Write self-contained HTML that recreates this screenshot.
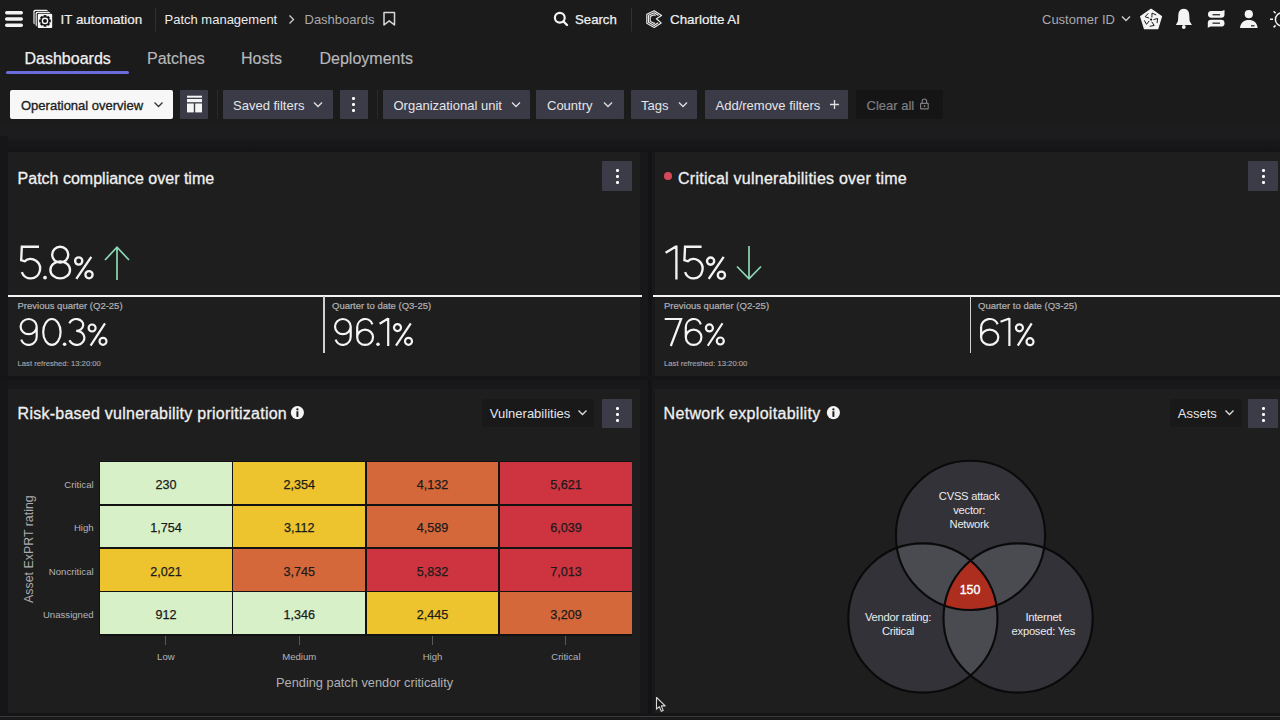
<!DOCTYPE html>
<html><head><meta charset="utf-8">
<style>
*{box-sizing:border-box;margin:0;padding:0}
html,body{width:1280px;height:720px;overflow:hidden;background:#18181a}
body{position:relative;font-family:"Liberation Sans",sans-serif;color:#e8e8e8}
.a{position:absolute;white-space:nowrap;line-height:1}
.hdr{position:absolute;left:0;top:0;width:1280px;height:136px;background:#1b1b1c}
.grad{position:absolute;left:0;top:125px;width:1280px;height:27px;background:linear-gradient(#1c1c1e 0px,#1d1d1f 11px,#19191b 15px,#141416 27px)}
.card{position:absolute;background:#1e1e1f}
.btn{position:absolute;background:#3b3a47;border-radius:1px}
.kb{position:absolute;background:#3c3c49;border-radius:1px}
.kb i{position:absolute;left:13.5px;width:3px;height:3px;background:#fff;border-radius:1.3px}
.sep{position:absolute;width:1px;background:#2e2e30}
.t13{font-size:13px}
.w{color:#f0f0f0}
.hc{position:absolute;display:flex;align-items:center;justify-content:center}
.hc span{font-size:12.6px;line-height:1;color:#1b1b1b;-webkit-text-stroke:0.25px #1b1b1b;position:relative;top:1.9px}
.hl{font-size:9.6px;color:#b4b4b6}
</style></head><body>
<div class="hdr"></div>
<div class="grad"></div>
<div style="position:absolute;left:0;top:136px;width:8px;height:584px;background:#161618"></div>

<!-- header -->
<svg class="a" style="left:0;top:0" width="1280" height="40">
 <g fill="#f4f4f4">
  <rect x="5" y="11" width="18" height="3.4" rx="1.7"/>
  <rect x="5" y="17.3" width="18" height="3.4" rx="1.7"/>
  <rect x="5" y="23.6" width="18" height="3.4" rx="1.7"/>
 </g>
 <!-- app icon -->
 <rect x="33.4" y="9.7" width="14.6" height="14.6" rx="1.6" fill="#f0f0f0"/>
 <rect x="34.6" y="10.9" width="14.6" height="14.6" rx="1.4" fill="#1b1b1c"/>
 <rect x="35.6" y="11.7" width="14.6" height="14.6" rx="1.6" fill="#f0f0f0"/>
 <rect x="36.8" y="12.9" width="15.2" height="15.2" rx="1.4" fill="#1b1b1c"/>
 <rect x="37.8" y="13.7" width="14.4" height="14.4" rx="1.2" fill="#f6f6f6"/>
 <g transform="translate(45,20.9)" fill="#111">
  <circle r="4.7"/>
  <g id="teeth"><rect x="-1.4" y="-5.8" width="2.8" height="11.6"/><rect x="-5.8" y="-1.4" width="11.6" height="2.8"/></g>
  <g transform="rotate(45)"><rect x="-1.4" y="-5.8" width="2.8" height="11.6"/><rect x="-5.8" y="-1.4" width="11.6" height="2.8"/></g>
  <circle r="3.3" fill="#f6f6f6"/>
  <circle r="1.95"/>
 </g>
 <rect x="155" y="8" width="1" height="23.5" fill="#303032"/>
 <!-- breadcrumb chevron -->
 <path d="M289.5 15.5 L293.5 19.5 L289.5 23.5" fill="none" stroke="#cfcfcf" stroke-width="1.3"/>
 <!-- bookmark -->
 <path d="M384 12.5 H394.5 V25 L389.25 20.8 L384 25 Z" fill="none" stroke="#d8d8d8" stroke-width="1.5" stroke-linejoin="round"/>
 <!-- search -->
 <circle cx="559.8" cy="17.8" r="4.9" fill="none" stroke="#f4f4f4" stroke-width="2.2"/>
 <path d="M563.5 21.5 L567 25" stroke="#f4f4f4" stroke-width="2.4" stroke-linecap="round"/>
 <rect x="631" y="8" width="1" height="23.5" fill="#303032"/>
 <!-- charlotte -->
 <g fill="none" stroke="#ececec" stroke-width="1.15" stroke-linejoin="round">
  <path d="M654.2 10.8 L661.6 15.5 L656.4 18.7 L661.2 22.9 L654.2 27.4 L646.8 23.3 L646.8 14.3 Z"/>
  <path d="M658.56 15.60 L654.20 12.79 L648.51 15.35 L648.51 22.26 L654.20 25.40 L658.16 22.80"/>
  <path d="M655.52 15.69 L654.20 14.79 L650.22 16.39 L650.22 21.21 L654.20 23.41 L655.12 22.71"/>
 </g>
 <!-- customer chevron -->
 <path d="M1122 16.5 L1126 20.5 L1130 16.5" fill="none" stroke="#cfcfcf" stroke-width="1.3"/>
 <!-- pentagon -->
 <path d="M1151.1 9.3 L1161.5 16.5 L1157.7 28.7 L1144.5 28.7 L1140.7 16.5 Z" fill="#f4f4f4" stroke="#f4f4f4" stroke-width="1.2" stroke-linejoin="round"/>
 <path d="M1151.89 17.44 L1152.02 13.06 L1156.23 14.98 M1153.40 19.68 L1157.60 18.45 L1157.08 23.05 M1151.73 21.81 L1154.20 25.43 L1149.67 26.35 M1149.19 20.89 L1146.52 24.35 L1144.24 20.32 M1149.29 18.18 L1145.17 16.71 L1148.29 13.30 " fill="none" stroke="#1b1b1c" stroke-width="1"/>
 <circle cx="1151.1" cy="19.6" r="1.1" fill="#111"/>
 <!-- bell -->
 <g fill="#f4f4f4">
  <path d="M1183.8 8.8 C1180.2 8.8 1178.4 11.6 1178.3 15.5 L1178 21 L1175.9 24.9 H1191.9 L1189.6 21 L1189.3 15.5 C1189.2 11.6 1187.4 8.8 1183.8 8.8 Z"/>
  <circle cx="1183.8" cy="27" r="1.9"/>
 </g>
 <!-- chat -->
 <g fill="#f4f4f4">
  <path d="M1211.4 10.9 H1221.8 L1224.5 9.9 V14.5 A3.3 3.3 0 0 1 1221.2 17.8 H1211.4 A3.45 3.45 0 0 1 1211.4 10.9 Z"/>
  <path d="M1211 19.7 H1221.1 A3.45 3.45 0 0 1 1221.1 26.6 H1210.6 L1207.8 27.7 V23 A3.3 3.3 0 0 1 1211 19.7 Z"/>
 </g>
 <rect x="1212.5" y="14" width="7.5" height="1.4" fill="#3a3a3c"/>
 <rect x="1212.5" y="22.5" width="7.5" height="1.4" fill="#3a3a3c"/>
 <!-- person -->
 <g fill="#f4f4f4">
  <circle cx="1248.8" cy="14.2" r="4.1"/>
  <path d="M1240 28 C1240.5 22.5 1244 20 1248.8 20 C1253.6 20 1257.1 22.5 1257.6 28 Z"/>
 </g>
 <rect x="1251" y="25.2" width="3.5" height="1.2" fill="#1b1b1c"/>
 <!-- sun -->
 <g stroke="#f0f0f0" stroke-width="1.5" fill="none">
  <circle cx="1282" cy="19.4" r="6.6"/>
  <path d="M1270 19.2 H1273 M1273.6 11.2 L1275.6 13.2 M1273.6 27.4 L1275.6 25.4"/>
 </g>
</svg>
<div class="a t13 w" style="left:60.5px;top:13.4px;font-size:13.4px;-webkit-text-stroke:0.2px #f0f0f0">IT automation</div>
<div class="a t13" style="left:164.5px;top:13.4px;color:#ececec">Patch management</div>
<div class="a t13" style="left:304.5px;top:13.4px;color:#a9a9ab">Dashboards</div>
<div class="a t13 w" style="left:575px;top:13.4px;font-size:13.2px;-webkit-text-stroke:0.25px #f0f0f0">Search</div>
<div class="a t13 w" style="left:670px;top:13.4px;font-size:13.4px;-webkit-text-stroke:0.2px #f0f0f0">Charlotte AI</div>
<div class="a t13" style="left:1042px;top:13.4px;color:#a9a9ab">Customer ID</div>

<!-- tabs -->
<div class="a" style="left:24.5px;top:50.5px;font-size:16px;color:#f2f2f2;-webkit-text-stroke:0.25px #f2f2f2">Dashboards</div>
<div class="a" style="left:147px;top:50.5px;font-size:16px;color:#b8b8ba;-webkit-text-stroke:0.15px #b8b8ba">Patches</div>
<div class="a" style="left:241px;top:50.5px;font-size:16px;color:#b8b8ba;-webkit-text-stroke:0.15px #b8b8ba">Hosts</div>
<div class="a" style="left:319.5px;top:50.5px;font-size:16px;color:#b8b8ba;-webkit-text-stroke:0.15px #b8b8ba">Deployments</div>
<div style="position:absolute;left:6px;top:71px;width:123px;height:3px;background:#6b6bd9;border-radius:2px"></div>

<!-- filter bar -->
<div style="position:absolute;left:10px;top:90px;width:163px;height:29px;background:#f7f7f7;border-radius:2px"></div>
<div class="btn" style="left:180px;top:89.5px;width:28px;height:29.5px"></div>
<div class="sep" style="left:216.5px;top:90px;height:29px;background:#2a2a2c"></div>
<div class="btn" style="left:223px;top:89.5px;width:109.5px;height:29.5px"></div>
<div class="kb" style="left:339.5px;top:89.5px;width:28.5px;height:29.5px"><i style="top:7.5px;left:12.8px"></i><i style="top:13.3px;left:12.8px"></i><i style="top:19px;left:12.8px"></i></div>
<div class="sep" style="left:377px;top:90px;height:29px;background:#2a2a2c"></div>
<div class="btn" style="left:383px;top:89.5px;width:147px;height:29.5px"></div>
<div class="btn" style="left:536px;top:89.5px;width:87.5px;height:29.5px"></div>
<div class="btn" style="left:630.5px;top:89.5px;width:66.5px;height:29.5px"></div>
<div class="btn" style="left:704.5px;top:89.5px;width:143.5px;height:29.5px"></div>
<div style="position:absolute;left:856px;top:90px;width:87px;height:29px;background:#151516;border-radius:2px"></div>
<svg class="a" style="left:0;top:80px" width="1280" height="50">
 <g fill="none" stroke-width="1.3">
  <path d="M154.5 22.5 L158.5 26.5 L162.5 22.5" stroke="#333"/>
  <path d="M314 22.5 L318 26.5 L322 22.5" stroke="#e0e0e0"/>
  <path d="M512 22.5 L516 26.5 L520 22.5" stroke="#e0e0e0"/>
  <path d="M604 22.5 L608 26.5 L612 22.5" stroke="#e0e0e0"/>
  <path d="M679 22.5 L683 26.5 L687 22.5" stroke="#e0e0e0"/>
  <path d="M834.5 20 V29 M830 24.5 H839" stroke="#e0e0e0"/>
 </g>
 <g fill="#f4f4f4">
  <rect x="187" y="15.7" width="15" height="2"/>
  <rect x="187" y="19" width="15" height="3.2"/>
  <rect x="187" y="23.5" width="6.8" height="8.9"/>
  <rect x="195.2" y="23.5" width="6.8" height="8.9"/>
 </g>
 <g fill="none" stroke="#7c7c80" stroke-width="1.2">
  <rect x="920.6" y="23.4" width="7.6" height="5.4" rx="0.4"/>
  <path d="M922.2 23.4 V21.2 A2.2 2.2 0 0 1 926.6 21.2 V23.4"/>
 </g>
 <rect x="923.8" y="25.2" width="1.4" height="1.8" fill="#7c7c80"/>
</svg>
<div class="a" style="left:21px;top:98.7px;font-size:13px;color:#1e1e1e;-webkit-text-stroke:0.35px #1e1e1e">Operational overview</div>
<div class="a" style="left:233px;top:98.7px;font-size:13px;color:#e6e6e8">Saved filters</div>
<div class="a" style="left:393.5px;top:98.7px;font-size:13px;color:#e6e6e8">Organizational unit</div>
<div class="a" style="left:547px;top:98.7px;font-size:13px;color:#e6e6e8">Country</div>
<div class="a" style="left:641px;top:98.7px;font-size:13px;color:#e6e6e8">Tags</div>
<div class="a" style="left:715.5px;top:98.7px;font-size:13px;color:#e6e6e8">Add/remove filters</div>
<div class="a" style="left:866.5px;top:98.7px;font-size:13px;color:#7e7e82;-webkit-text-stroke:0.2px #7e7e82">Clear all</div>

<!-- cards -->
<div style="position:absolute;left:648px;top:152px;width:4px;height:561px;background:#131315"></div>
<div style="position:absolute;left:0;top:376px;width:1280px;height:4px;background:#151517"></div>
<div style="position:absolute;left:0;top:713px;width:1280px;height:3px;background:#151517"></div>

<div class="card" style="left:8px;top:152px;width:632px;height:224px"></div>
<div class="card" style="left:655px;top:152px;width:625px;height:224px"></div>
<div class="card" style="left:8px;top:389px;width:632px;height:324px"></div>
<div class="card" style="left:655px;top:389px;width:625px;height:324px"></div>
<div style="position:absolute;left:0;top:716px;width:1280px;height:1px;background:#3a3a3a"></div>
<div style="position:absolute;left:0;top:717px;width:1280px;height:3px;background:#1a1a1a"></div>


<!-- card1 content -->
<div class="a" style="left:17.6px;top:171px;font-size:16px;color:#f0f0f0;-webkit-text-stroke:0.3px #f0f0f0">Patch compliance over time</div>
<div class="kb" style="left:602px;top:161px;width:30px;height:30px"><i style="top:8px;left:13.6px"></i><i style="top:14px;left:13.6px"></i><i style="top:20px;left:13.6px"></i></div>
<div style="position:absolute;left:8px;top:294.5px;width:634px;height:2px;background:#f4f4f4"></div>
<div style="position:absolute;left:323px;top:296px;width:1.5px;height:57px;background:#cfcfcf"></div>
<div class="a" style="left:17.5px;top:300.6px;font-size:9.5px;color:#b2b2b4;-webkit-text-stroke:0.2px #b2b2b4">Previous quarter (Q2-25)</div>
<div class="a" style="left:332px;top:300.6px;font-size:9.5px;color:#b2b2b4;-webkit-text-stroke:0.2px #b2b2b4">Quarter to date (Q3-25)</div>
<div class="a" style="left:17.5px;top:359.8px;font-size:7.7px;color:#a4a4a6;-webkit-text-stroke:0.15px #a4a4a6">Last refreshed: 13:20:00</div>

<!-- card2 content -->
<div style="position:absolute;left:664.3px;top:172.4px;width:7.6px;height:7.6px;border-radius:50%;background:#d6475a"></div>
<div class="a" style="left:678px;top:171px;font-size:16px;color:#f0f0f0;-webkit-text-stroke:0.3px #f0f0f0;letter-spacing:0.25px">Critical vulnerabilities over time</div>
<div class="kb" style="left:1248px;top:161px;width:30px;height:30px"><i style="top:8px;left:13.6px"></i><i style="top:14px;left:13.6px"></i><i style="top:20px;left:13.6px"></i></div>
<div style="position:absolute;left:653px;top:294.5px;width:627px;height:2px;background:#f4f4f4"></div>
<div style="position:absolute;left:969.5px;top:296px;width:1.5px;height:57px;background:#cfcfcf"></div>
<div class="a" style="left:664px;top:300.6px;font-size:9.5px;color:#b2b2b4;-webkit-text-stroke:0.2px #b2b2b4">Previous quarter (Q2-25)</div>
<div class="a" style="left:978px;top:300.6px;font-size:9.5px;color:#b2b2b4;-webkit-text-stroke:0.2px #b2b2b4">Quarter to date (Q3-25)</div>
<div class="a" style="left:664px;top:359.8px;font-size:7.7px;color:#a4a4a6;-webkit-text-stroke:0.15px #a4a4a6">Last refreshed: 13:20:00</div>

<!-- DIGITS -->
<svg class="a" style="left:0;top:0" width="1280" height="720">
<path d="M39 246.78 L21.84 246.78 L21.18 260.22 L24.61 261.29 A9.38 9.71 0 0 1 35.68 260.53 A9.38 9.71 0 0 1 39.71 271.23 A9.38 9.71 0 0 1 31.05 278.42 A9.38 9.71 0 0 1 21.82 272.04M52.14 254.73 A8.06 7.96 0 0 1 60.2 246.78 A8.06 7.96 0 0 1 68.27 254.73 A8.06 7.96 0 0 1 60.2 262.69 A8.06 7.96 0 0 1 52.14 254.73ZM50.38 269.96 A9.82 8.47 0 0 1 60.2 261.49 A9.82 8.47 0 0 1 70.03 269.96 A9.82 8.47 0 0 1 60.2 278.43 A9.82 8.47 0 0 1 50.38 269.96ZM75.1 261 A3.6 3.6 0 0 1 78.7 257.4 A3.6 3.6 0 0 1 82.3 261 A3.6 3.6 0 0 1 78.7 264.6 A3.6 3.6 0 0 1 75.1 261ZM85.4 274.7 A3.6 3.6 0 0 1 89 271.1 A3.6 3.6 0 0 1 92.6 274.7 A3.6 3.6 0 0 1 89 278.3 A3.6 3.6 0 0 1 85.4 274.7ZM91.3 256.9 L76.3 278.9" fill="none" stroke="#f4f4f4" stroke-width="2.35"/>
<path d="M665.6 252.7 L676.4 246.31 M676.4 245.6 L676.4 279.6M701.58 246.78 L685.04 246.78 L684.41 260.22 L687.74 261.29 A9 9.71 0 0 1 698.36 260.53 A9 9.71 0 0 1 702.22 271.23 A9 9.71 0 0 1 693.92 278.42 A9 9.71 0 0 1 685.07 272.04M707 261.1 A3.6 3.6 0 0 1 710.6 257.5 A3.6 3.6 0 0 1 714.2 261.1 A3.6 3.6 0 0 1 710.6 264.7 A3.6 3.6 0 0 1 707 261.1ZM717.8 275.2 A3.6 3.6 0 0 1 721.4 271.6 A3.6 3.6 0 0 1 725 275.2 A3.6 3.6 0 0 1 721.4 278.8 A3.6 3.6 0 0 1 717.8 275.2ZM723.7 256.9 L708.7 278.9" fill="none" stroke="#f4f4f4" stroke-width="2.35"/>
<path d="M20.6 326.61 A8.05 7.61 0 0 1 28.65 319 A8.05 7.61 0 0 1 36.7 326.61 A8.05 7.61 0 0 1 28.65 334.22 A8.05 7.61 0 0 1 20.6 326.61ZM36.7 326.61 L36.7 336.47 A8.05 8.43 0 0 1 30.19 344.75 A8.05 8.43 0 0 1 21.19 339.63M43.2 331.95 A8.7 12.95 0 0 1 51.9 319 A8.7 12.95 0 0 1 60.6 331.95 A8.7 12.95 0 0 1 51.9 344.9 A8.7 12.95 0 0 1 43.2 331.95ZM69.37 323.38 A7.04 5.91 0 0 1 77.39 319.09 A7.04 5.91 0 0 1 83.19 325.43 A7.04 5.91 0 0 1 76.17 330.83 L76.7 330.83 A7.7 7.04 0 0 1 84.35 337.05 A7.7 7.04 0 0 1 78.48 344.71 A7.7 7.04 0 0 1 69.46 340.27M88.6 328 A3.5 3.5 0 0 1 92.1 324.5 A3.5 3.5 0 0 1 95.6 328 A3.5 3.5 0 0 1 92.1 331.5 A3.5 3.5 0 0 1 88.6 328ZM99.5 341.3 A3.5 3.5 0 0 1 103 337.8 A3.5 3.5 0 0 1 106.5 341.3 A3.5 3.5 0 0 1 103 344.8 A3.5 3.5 0 0 1 99.5 341.3ZM105 323.3 L90.6 345.6" fill="none" stroke="#f4f4f4" stroke-width="2.2"/>
<path d="M335 326.61 A7.85 7.61 0 0 1 342.85 319 A7.85 7.61 0 0 1 350.7 326.61 A7.85 7.61 0 0 1 342.85 334.22 A7.85 7.61 0 0 1 335 326.61ZM350.7 326.61 L350.7 336.47 A7.85 8.43 0 0 1 344.35 344.75 A7.85 8.43 0 0 1 335.57 339.63M357.2 337.29 A7.9 7.61 0 0 1 365.1 329.68 A7.9 7.61 0 0 1 373 337.29 A7.9 7.61 0 0 1 365.1 344.9 A7.9 7.61 0 0 1 357.2 337.29ZM357.2 337.29 L357.2 327.43 A7.9 8.43 0 0 1 363.59 319.15 A7.9 8.43 0 0 1 372.42 324.27M379.6 323.7 L388.2 318.56 M388.2 317.9 L388.2 346M394 327.6 A3.5 3.5 0 0 1 397.5 324.1 A3.5 3.5 0 0 1 401 327.6 A3.5 3.5 0 0 1 397.5 331.1 A3.5 3.5 0 0 1 394 327.6ZM405 341.3 A3.5 3.5 0 0 1 408.5 337.8 A3.5 3.5 0 0 1 412 341.3 A3.5 3.5 0 0 1 408.5 344.8 A3.5 3.5 0 0 1 405 341.3ZM410.8 323.3 L396 345.6" fill="none" stroke="#f4f4f4" stroke-width="2.2"/>
<path d="M664.7 319 L681.1 319 L670.8 346M685.8 337.29 A7.8 7.61 0 0 1 693.6 329.68 A7.8 7.61 0 0 1 701.4 337.29 A7.8 7.61 0 0 1 693.6 344.9 A7.8 7.61 0 0 1 685.8 337.29ZM685.8 337.29 L685.8 327.43 A7.8 8.43 0 0 1 692.11 319.15 A7.8 8.43 0 0 1 700.83 324.27M705.9 327.9 A3.5 3.5 0 0 1 709.4 324.4 A3.5 3.5 0 0 1 712.9 327.9 A3.5 3.5 0 0 1 709.4 331.4 A3.5 3.5 0 0 1 705.9 327.9ZM716.8 341 A3.5 3.5 0 0 1 720.3 337.5 A3.5 3.5 0 0 1 723.8 341 A3.5 3.5 0 0 1 720.3 344.5 A3.5 3.5 0 0 1 716.8 341ZM722.5 323.25 L707.8 345.75" fill="none" stroke="#f4f4f4" stroke-width="2.2"/>
<path d="M981.1 337.29 A8.6 7.61 0 0 1 989.7 329.68 A8.6 7.61 0 0 1 998.3 337.29 A8.6 7.61 0 0 1 989.7 344.9 A8.6 7.61 0 0 1 981.1 337.29ZM981.1 337.29 L981.1 327.43 A8.6 8.43 0 0 1 988.06 319.15 A8.6 8.43 0 0 1 997.67 324.27M1000.5 321.7 L1009.4 318.56 M1009.4 317.9 L1009.4 346M1015.9 327.8 A3.5 3.5 0 0 1 1019.4 324.3 A3.5 3.5 0 0 1 1022.9 327.8 A3.5 3.5 0 0 1 1019.4 331.3 A3.5 3.5 0 0 1 1015.9 327.8ZM1026.5 341.7 A3.5 3.5 0 0 1 1030 338.2 A3.5 3.5 0 0 1 1033.5 341.7 A3.5 3.5 0 0 1 1030 345.2 A3.5 3.5 0 0 1 1026.5 341.7ZM1031.7 323.3 L1017.8 345.6" fill="none" stroke="#f4f4f4" stroke-width="2.2"/>
<circle cx="45" cy="277.6" r="1.9" fill="#f4f4f4"/>
<circle cx="64.6" cy="344.3" r="1.8" fill="#f4f4f4"/>
<circle cx="378" cy="344.3" r="1.8" fill="#f4f4f4"/>
<path d="M117 280 V247.5 M105 260 L117 247.2 L129 260" fill="none" stroke="#8cd8b4" stroke-width="1.7"/>
<path d="M749 246 V278.5 M737 266.5 L749 278.8 L761 266.5" fill="none" stroke="#8cd8b4" stroke-width="1.7"/>
</svg>
<!-- /DIGITS -->

<!-- card3 content -->
<div class="a" style="left:17.6px;top:406.4px;font-size:16px;color:#f0f0f0;-webkit-text-stroke:0.3px #f0f0f0;letter-spacing:0.25px">Risk-based vulnerability prioritization</div>
<svg class="a" style="left:290px;top:405px" width="15" height="15"><circle cx="7.4" cy="7.6" r="6.6" fill="#f4f4f4"/><rect x="6.4" y="6.3" width="2" height="5.6" fill="#1e1e20"/><circle cx="7.4" cy="4.4" r="1.15" fill="#1e1e20"/></svg>
<div style="position:absolute;left:482px;top:399px;width:112px;height:28px;background:#19191a;border-radius:2px"></div>
<div class="a" style="left:489.8px;top:407.3px;font-size:13px;color:#e6e6e8">Vulnerabilities</div>
<svg class="a" style="left:570px;top:405px" width="20" height="15"><path d="M8.5 5.5 L12.5 9.5 L16.5 5.5" fill="none" stroke="#e0e0e0" stroke-width="1.3"/></svg>
<div class="kb" style="left:602px;top:398.5px;width:30px;height:29.5px"><i style="top:8px;left:13.6px"></i><i style="top:14px;left:13.6px"></i><i style="top:20px;left:13.6px"></i></div>
<div class="a" style="left:20px;top:548.5px;font-size:12.4px;color:#acacae;transform:rotate(-90deg);transform-origin:0 0;top:603px;left:22.8px">Asset ExPRT rating</div>
<div class="a" style="left:276px;top:676.6px;font-size:12.8px;color:#b0b0b2">Pending patch vendor criticality</div>
<!-- HEAT -->
<div style="position:absolute;left:98.6px;top:460.6px;width:533.2px;height:175.6px;background:#121213"></div>
<div class="hc" style="left:100.00px;top:462.20px;width:131.8px;height:41.9px;background:#d8f0c8"><span>230</span></div>
<div class="hc" style="left:233.33px;top:462.20px;width:131.8px;height:41.9px;background:#edc32e"><span>2,354</span></div>
<div class="hc" style="left:366.66px;top:462.20px;width:131.8px;height:41.9px;background:#d5683a"><span>4,132</span></div>
<div class="hc" style="left:499.99px;top:462.20px;width:131.8px;height:41.9px;background:#cd3440"><span>5,621</span></div>
<div class="a hl" style="right:1186.4px;top:480.00px">Critical</div>
<div class="hc" style="left:100.00px;top:505.60px;width:131.8px;height:41.9px;background:#d8f0c8"><span>1,754</span></div>
<div class="hc" style="left:233.33px;top:505.60px;width:131.8px;height:41.9px;background:#edc32e"><span>3,112</span></div>
<div class="hc" style="left:366.66px;top:505.60px;width:131.8px;height:41.9px;background:#d5683a"><span>4,589</span></div>
<div class="hc" style="left:499.99px;top:505.60px;width:131.8px;height:41.9px;background:#cd3440"><span>6,039</span></div>
<div class="a hl" style="right:1186.4px;top:523.40px">High</div>
<div class="hc" style="left:100.00px;top:549.00px;width:131.8px;height:41.9px;background:#edc32e"><span>2,021</span></div>
<div class="hc" style="left:233.33px;top:549.00px;width:131.8px;height:41.9px;background:#d5683a"><span>3,745</span></div>
<div class="hc" style="left:366.66px;top:549.00px;width:131.8px;height:41.9px;background:#cd3440"><span>5,832</span></div>
<div class="hc" style="left:499.99px;top:549.00px;width:131.8px;height:41.9px;background:#cd3440"><span>7,013</span></div>
<div class="a hl" style="right:1186.4px;top:566.80px">Noncritical</div>
<div class="hc" style="left:100.00px;top:592.40px;width:131.8px;height:41.9px;background:#d8f0c8"><span>912</span></div>
<div class="hc" style="left:233.33px;top:592.40px;width:131.8px;height:41.9px;background:#d8f0c8"><span>1,346</span></div>
<div class="hc" style="left:366.66px;top:592.40px;width:131.8px;height:41.9px;background:#edc32e"><span>2,445</span></div>
<div class="hc" style="left:499.99px;top:592.40px;width:131.8px;height:41.9px;background:#d5683a"><span>3,209</span></div>
<div class="a hl" style="right:1186.4px;top:610.20px">Unassigned</div>
<div style="position:absolute;left:165.40px;top:636px;width:1px;height:9px;background:#5a5a5c"></div>
<div class="a hl" style="left:105.90px;width:120px;text-align:center;top:651.7px">Low</div>
<div style="position:absolute;left:298.73px;top:636px;width:1px;height:9px;background:#5a5a5c"></div>
<div class="a hl" style="left:239.23px;width:120px;text-align:center;top:651.7px">Medium</div>
<div style="position:absolute;left:432.06px;top:636px;width:1px;height:9px;background:#5a5a5c"></div>
<div class="a hl" style="left:372.56px;width:120px;text-align:center;top:651.7px">High</div>
<div style="position:absolute;left:565.39px;top:636px;width:1px;height:9px;background:#5a5a5c"></div>
<div class="a hl" style="left:505.89px;width:120px;text-align:center;top:651.7px">Critical</div>
<!-- /HEAT -->

<!-- card4 content -->
<div class="a" style="left:663.6px;top:406.4px;font-size:16px;color:#f0f0f0;-webkit-text-stroke:0.3px #f0f0f0;letter-spacing:0.3px">Network exploitability</div>
<svg class="a" style="left:826px;top:405px" width="15" height="15"><circle cx="7.4" cy="7.6" r="6.6" fill="#f4f4f4"/><rect x="6.4" y="6.3" width="2" height="5.6" fill="#1e1e20"/><circle cx="7.4" cy="4.4" r="1.15" fill="#1e1e20"/></svg>
<div style="position:absolute;left:1170px;top:399px;width:71.5px;height:28px;background:#19191a;border-radius:2px"></div>
<div class="a" style="left:1177.8px;top:407.3px;font-size:13px;color:#e6e6e8">Assets</div>
<svg class="a" style="left:1217px;top:405px" width="20" height="15"><path d="M8.5 5.5 L12.5 9.5 L16.5 5.5" fill="none" stroke="#e0e0e0" stroke-width="1.3"/></svg>
<div class="kb" style="left:1248px;top:398.5px;width:30px;height:29.5px"><i style="top:8px;left:13.6px"></i><i style="top:14px;left:13.6px"></i><i style="top:20px;left:13.6px"></i></div>
<!-- VENN -->
<svg class="a" style="left:0;top:0" width="1280" height="720">
<defs><clipPath id="cT"><circle cx="970.5" cy="535.4" r="74.6" /></clipPath><clipPath id="cL"><circle cx="922.9" cy="618.0" r="74.6" /></clipPath><clipPath id="cR"><circle cx="1018.1" cy="618.0" r="74.6" /></clipPath></defs>
<circle cx="970.5" cy="535.4" r="74.6" fill="#333238"/>
<circle cx="922.9" cy="618.0" r="74.6" fill="#333238"/>
<circle cx="1018.1" cy="618.0" r="74.6" fill="#333238"/>
<g clip-path="url(#cT)"><circle cx="922.9" cy="618.0" r="74.6" fill="#4a4a51"/><circle cx="1018.1" cy="618.0" r="74.6" fill="#4a4a51"/></g>
<g clip-path="url(#cL)"><circle cx="1018.1" cy="618.0" r="74.6" fill="#4a4a51"/></g>
<g clip-path="url(#cT)"><g clip-path="url(#cL)"><circle cx="1018.1" cy="618.0" r="74.6" fill="#ad2d1f"/></g></g>
<circle cx="970.5" cy="535.4" r="74.6" fill="none" stroke="#0a0a0a" stroke-width="2.1"/>
<circle cx="922.9" cy="618.0" r="74.6" fill="none" stroke="#0a0a0a" stroke-width="2.1"/>
<circle cx="1018.1" cy="618.0" r="74.6" fill="none" stroke="#0a0a0a" stroke-width="2.1"/>
</svg>
<div class="a" style="left:899.2px;width:140px;text-align:center;top:490.68px;font-size:11.2px;color:#ececec;letter-spacing:-0.25px">CVSS attack</div>
<div class="a" style="left:899.2px;width:140px;text-align:center;top:504.73px;font-size:11.2px;color:#ececec;letter-spacing:-0.25px">vector:</div>
<div class="a" style="left:899.2px;width:140px;text-align:center;top:518.78px;font-size:11.2px;color:#ececec;letter-spacing:-0.25px">Network</div>
<div class="a" style="left:828.0px;width:140px;text-align:center;top:612.48px;font-size:11.2px;color:#ececec;letter-spacing:-0.25px">Vendor rating:</div>
<div class="a" style="left:828.0px;width:140px;text-align:center;top:626.08px;font-size:11.2px;color:#ececec;letter-spacing:-0.25px">Critical</div>
<div class="a" style="left:973.4px;width:140px;text-align:center;top:612.48px;font-size:11.2px;color:#ececec;letter-spacing:-0.25px">Internet</div>
<div class="a" style="left:973.4px;width:140px;text-align:center;top:626.08px;font-size:11.2px;color:#ececec;letter-spacing:-0.25px">exposed: Yes</div>
<div class="a" style="left:920px;width:100px;text-align:center;top:583.72px;font-size:12.4px;color:#fff;-webkit-text-stroke:0.35px #fff">150</div>
<!-- /VENN -->
<!-- cursor -->
<svg class="a" style="left:655px;top:696px" width="14" height="18"><path d="M1.5 1.5 L1.5 13.2 L4.3 10.6 L6.3 15.2 L8.2 14.4 L6.3 9.9 L10.2 9.9 Z" fill="#151517" stroke="#d8d8d8" stroke-width="1.1" stroke-linejoin="round"/></svg>
</body></html>
